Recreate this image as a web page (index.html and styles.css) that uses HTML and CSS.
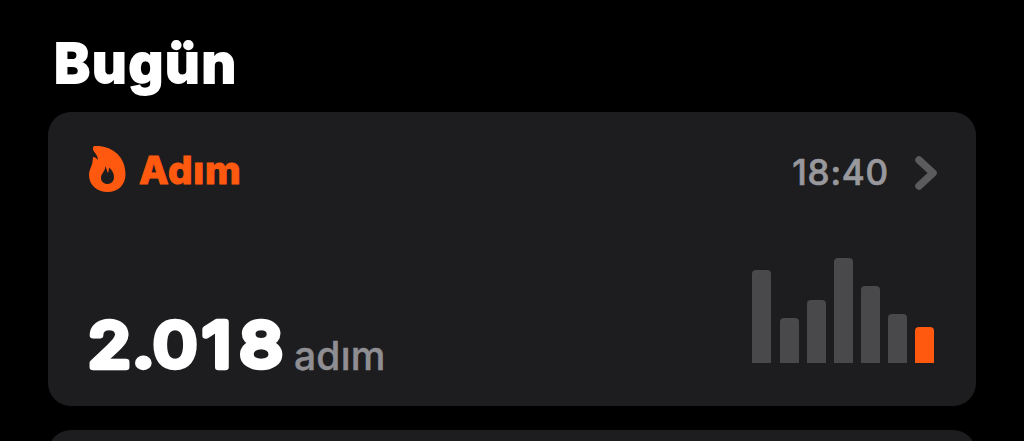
FILE: index.html
```html
<!DOCTYPE html>
<html lang="tr">
<head>
    <meta charset="UTF-8">
    <meta name="viewport" content="width=device-width, initial-scale=1.0">
    <title>Bugün</title>
    <link rel="stylesheet" href="styles.css">
</head>
<body>
    <main class="container">
        <h1>Bugün</h1>

        <section class="card">
            <div class="card-header">
                <svg class="flame" viewBox="0 0 38 46">
                    <path fill-rule="evenodd" d="M6 0C22-1 37.500 9 37.500 28C37.500 39 30 46 19.500 46C9 46 1 39 1 29C1 24 4 20 4.500 16C4.800 13 5 12 5 11C7 11 8.500 12 9.500 14C10.500 11 8 8 6 5.500C4.500 3.500 4.500 1 6 0ZM17 20C18 25 13 27 13 32C13 35.500 16 38 19.500 38C23.500 38 26 35 26 31C26 27 24 24 21 21.500C21 24 20.500 26 20 27C18.500 25 19 22 17 20Z"/>
                </svg>
                <span class="card-title">Adım</span>
                <span class="time">18:40</span>
                <svg class="chevron" viewBox="0 0 24 36">
                    <path d="M5 5L19 18L5 31"/>
                </svg>
            </div>

            <div class="card-body">
                <div class="steps">
                    <svg class="value" viewBox="0 0 198 64">
                        <text x="0 40 57.500 101.500 134" y="52" transform="scale(1.13 1)">2.018</text>
                    </svg>
                    <span class="unit">adım</span>
                </div>
                <div class="chart">
                    <div class="bar" style="height: 93px;"></div>
                    <div class="bar" style="height: 45px;"></div>
                    <div class="bar" style="height: 63px;"></div>
                    <div class="bar" style="height: 105px;"></div>
                    <div class="bar" style="height: 77px;"></div>
                    <div class="bar" style="height: 49px;"></div>
                    <div class="bar today" style="height: 36px;"></div>
                </div>
            </div>
        </section>

        <section class="card"></section>
    </main>
</body>
</html>
```

FILE: styles.css
```css
body {
    margin: 0;
    background: #000;
    color: #fff;
    font-family: Inter, "Liberation Sans", sans-serif;
}
.container {
    box-sizing: border-box;
    height: 441px;
    padding: 29px 48px 0;
    overflow: hidden;
}
h1 {
    height: 83px;
    margin: 0;
    padding-left: 6px;
    font-size: 54.5px;
    line-height: 68px;
    font-weight: 800;
    letter-spacing: 1.8px;
    -webkit-text-stroke: 1.8px #fff;
}
.card {
    box-sizing: border-box;
    height: 294px;
    margin-bottom: 24px;
    padding: 30px 41px 43px 40px;
    border-radius: 23px;
    background: #1d1d1f;
    display: flex;
    flex-direction: column;
    justify-content: space-between;
}
.card-header {
    display: flex;
    align-items: center;
    height: 56px;
}
.flame {
    width: 38px;
    height: 46px;
    margin-top: -2px;
    margin-right: 13px;
    fill: #ff5910;
}
.card-title {
    color: #ff5910;
    font-size: 38.5px;
    font-weight: 800;
    letter-spacing: 0.7px;
    -webkit-text-stroke: 1px #ff5910;
}
.time {
    margin-top: 3px;
    margin-left: auto;
    color: #98989d;
    font-size: 35px;
    font-weight: 500;
    letter-spacing: 0.8px;
    -webkit-text-stroke: 0.7px #98989d;
}
.chevron {
    width: 24px;
    height: 36px;
    margin: 5px -3px 0 25px;
    fill: none;
    stroke: #5b5b5e;
    stroke-width: 7.5;
    stroke-linecap: round;
    stroke-linejoin: round;
}
.card-body {
    display: flex;
    align-items: flex-end;
    justify-content: space-between;
}
.steps {
    display: flex;
    align-items: flex-end;
    height: 64px;
    margin-bottom: -16px;
}
.value {
    width: 198px;
    height: 64px;
    overflow: visible;
    fill: #fff;
    stroke: #fff;
    stroke-width: 6.5;
    stroke-linejoin: round;
    font-size: 62px;
    font-weight: 400;
}
.unit {
    margin-left: 8px;
    margin-bottom: -1px;
    color: #8e8e93;
    font-size: 39px;
    line-height: 48px;
    font-weight: 500;
    letter-spacing: 0.2px;
    -webkit-text-stroke: 0.5px #8e8e93;
}
.chart {
    display: flex;
    align-items: flex-end;
    gap: 8.1px;
    height: 105px;
    margin-right: 1px;
}
.bar {
    width: 19px;
    border-radius: 4px 4px 0 0;
    background: #49494b;
}
.bar.today {
    background: #ff5910;
}
```
